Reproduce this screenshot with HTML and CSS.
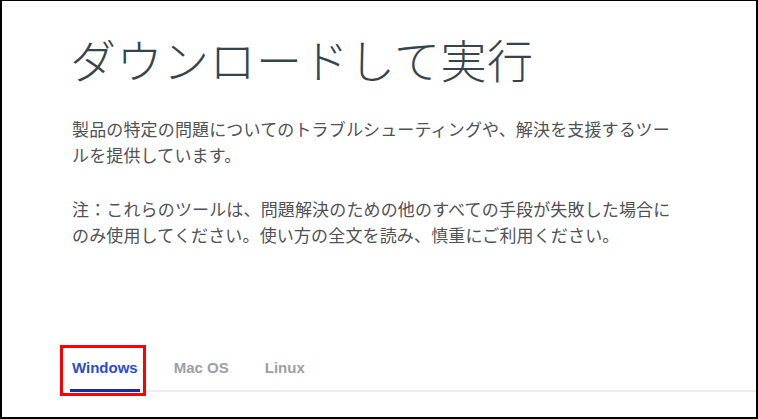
FILE: index.html
```html
<!DOCTYPE html>
<html lang="ja">
<head>
    <meta charset="UTF-8">
    <meta name="viewport" content="width=device-width, initial-scale=1.0">
    <title>ダウンロードして実行</title>
    <link rel="stylesheet" href="styles.css">
</head>
<body>
    <div class="frame">
        <h1 class="title">ダウンロードして実行</h1>

        <p class="text">製品の特定の問題についてのトラブルシューティングや、解決を支援するツールを提供しています。</p>
        <p class="text">注：これらのツールは、問題解決のための他のすべての手段が失敗した場合にのみ使用してください。使い方の全文を読み、慎重にご利用ください。</p>

        <div class="tabs">
            <a class="tab active" href="#">Windows</a>
            <a class="tab" href="#">Mac OS</a>
            <a class="tab" href="#">Linux</a>
            <!-- annotation box round the selected tab -->
            <span class="mark"></span>
        </div>
    </div>
</body>
</html>
```

FILE: styles.css
```css
html, body {
    margin: 0;
    padding: 0;
    background-color: #fff;
}
.frame {
    width: 758px;
    height: 419px;
    box-sizing: border-box;
    border: 2px solid #000;
    border-top-width: 1px;
    padding: 0 0 0 68px;
    font-family: "Noto Sans CJK JP", sans-serif;
    overflow: hidden;
}
.title {
    margin: 24px 0 25px;
    font-size: 46px;
    font-weight: 300;
    line-height: 66px;
    color: #36444e;
    letter-spacing: 0.5px;
}
.text {
    width: 600px;
    margin: 0 0 28px 2px;
    font-size: 17px;
    line-height: 26px;
    color: #4f5256;
    letter-spacing: 0.15px;
}
.tabs {
    position: relative;
    display: flex;
    gap: 32px;
    margin-top: 105px;
    border-bottom: 2px solid #ebebf3;
    font-family: "Liberation Sans", Arial, sans-serif;
}
.tab {
    padding: 6px 2px 13px;
    margin-bottom: -2px;
    font-size: 15px;
    font-weight: 700;
    color: #9c9fa6;
    text-decoration: none;
    border-bottom: 3px solid transparent;
}
.tab.active {
    color: #2a4ad6;
    border-bottom-color: #1c2a9e;
}
.mark {
    position: absolute;
    left: -10px;
    top: -8px;
    width: 80px;
    height: 45px;
    border: 3px solid #ff0000;
}
```
